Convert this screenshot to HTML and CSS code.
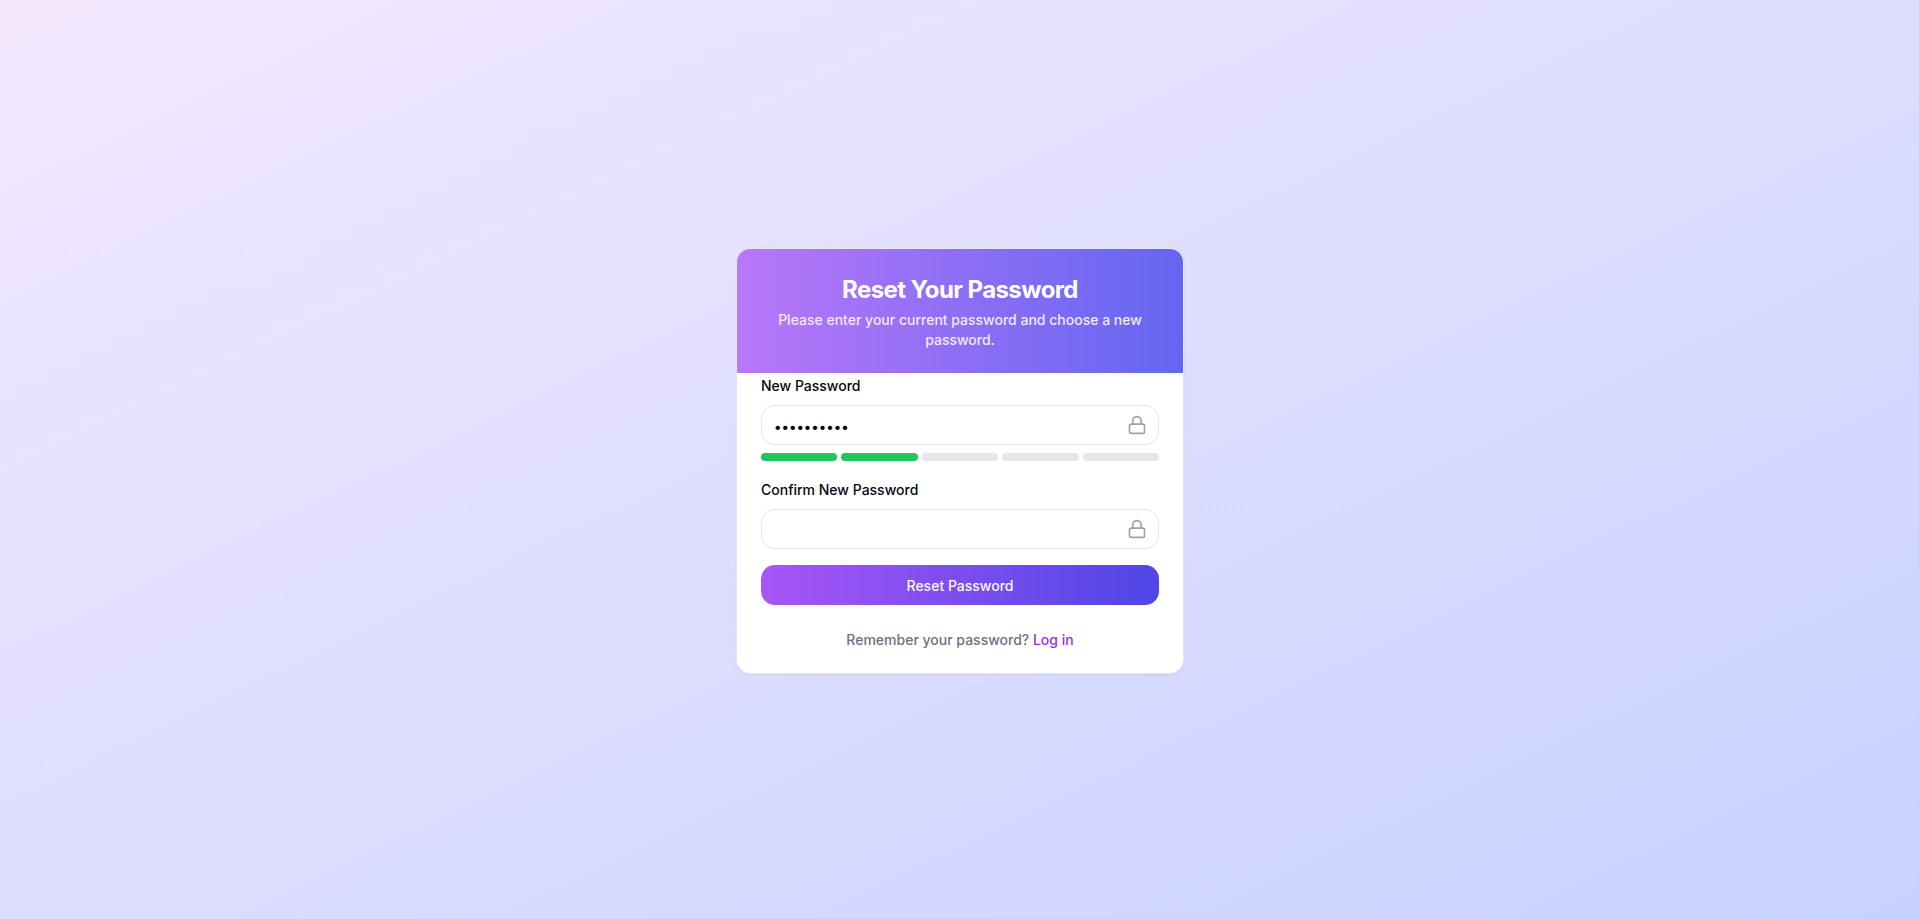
FILE: index.html
```html
<!DOCTYPE html>
<html lang="en">
<head>
<meta charset="utf-8">
<meta name="viewport" content="width=device-width, initial-scale=1">
<title>Reset Your Password</title>
<link rel="stylesheet" href="styles.css">
</head>
<body>
<main class="page">
  <section class="card">
    <header class="card-header">
      <h1 class="title">Reset Your Password</h1>
      <p class="subtitle">Please enter your current password and choose a new password.</p>
    </header>
    <form class="form">
      <div class="field">
        <label class="label" for="new-password">New Password</label>
        <div class="input-wrap">
          <input class="input" id="new-password" type="password" value="Abcdefghij">
          <svg class="lock" viewBox="0 0 24 24" aria-hidden="true"><rect x="3" y="11" width="18" height="11" rx="2"/><path d="M7 11V7a5 5 0 0 1 10 0v4"/></svg>
        </div>
        <div class="strength">
          <span class="bar bar-on"></span>
          <span class="bar bar-on"></span>
          <span class="bar"></span>
          <span class="bar"></span>
          <span class="bar"></span>
        </div>
      </div>
      <div class="field">
        <label class="label" for="confirm-password">Confirm New Password</label>
        <div class="input-wrap">
          <input class="input" id="confirm-password" type="password">
          <svg class="lock" viewBox="0 0 24 24" aria-hidden="true"><rect x="3" y="11" width="18" height="11" rx="2"/><path d="M7 11V7a5 5 0 0 1 10 0v4"/></svg>
        </div>
      </div>
      <button class="submit" type="submit">Reset Password</button>
    </form>
    <footer class="card-footer">
      <p class="footer-text">Remember your password? <a class="link" href="#login">Log in</a></p>
    </footer>
  </section>
</main>
</body>
</html>
```
FILE: styles.css
```css
*, *::before, *::after { box-sizing: border-box; }
body {
  margin: 0;
  font-family: Inter, "Liberation Sans", sans-serif;
  font-size: 14px;
  line-height: 20px;
  font-weight: 500;
  color: #030712;
}
.page {
  min-height: 100vh;
  display: flex;
  align-items: center;
  justify-content: center;
  padding: 19px 16px 16px 17px;
  background: linear-gradient(to bottom right, #f3e8ff, #c7d2fe);
}
.card {
  width: 100%;
  max-width: 448px;
  overflow: hidden;
  border: 1px solid #e5e7eb;
  border-radius: 14px;
  background: #fff;
  box-shadow: 0 1px 2px rgba(0, 0, 0, 0.05);
}
.card-header {
  padding: 25px 24px 23px;
  text-align: center;
  color: #fff;
  background: linear-gradient(to right, #b977f9, #6366f1);
}
.title {
  margin: 0 0 4px;
  font-size: 24px;
  line-height: 32px;
  font-weight: 700;
  letter-spacing: -0.6px;
}
.subtitle { margin: 0; color: #f3e8ff; }
.form {
  display: flex;
  flex-direction: column;
  gap: 16px;
  padding: 0 24px 24px;
}
.field { display: flex; flex-direction: column; gap: 8px; }
.label { padding-top: 2px; line-height: 22px; }
.input-wrap { position: relative; display: flex; }
.input {
  width: 100%;
  height: 40px;
  padding: 9px 40px 7px 12px;
  border: 1px solid #e5e7eb;
  border-radius: 14px;
  background: #fff;
  color: inherit;
  font: inherit;
}
.lock {
  position: absolute;
  top: 10px;
  right: 12px;
  width: 20px;
  height: 20px;
  fill: none;
  stroke: #9ca3af;
  stroke-width: 2;
  stroke-linecap: round;
  stroke-linejoin: round;
}
.strength { display: flex; gap: 4px; }
.bar { flex: 1; height: 8px; border-radius: 4px; background: #e5e7eb; }
.bar-on { background: #22c55e; }
.submit {
  height: 40px;
  padding: 2px 16px 0;
  border: 0;
  border-radius: 14px;
  background: linear-gradient(to right, #a855f7, #4f46e5);
  color: #f9fafb;
  font: inherit;
}
.card-footer { padding: 1px 24px 23px; text-align: center; }
.footer-text { margin: 0; color: #6b7280; }
.link { color: #9333ea; text-decoration: none; }
```
